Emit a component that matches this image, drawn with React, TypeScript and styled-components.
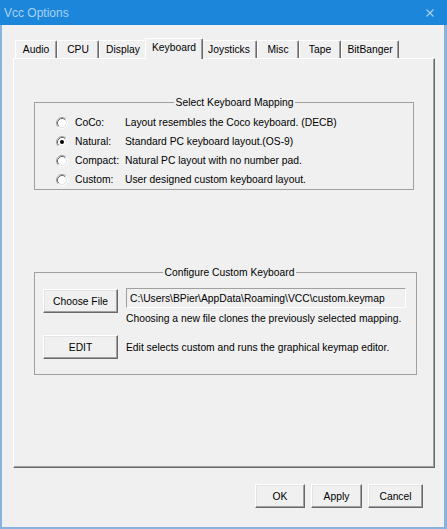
import React from "react";
import styled, { createGlobalStyle } from "styled-components";

const GlobalStyle = createGlobalStyle`
  html, body {
    margin: 0;
    padding: 0;
    background: #f0f0f0;
  }
  body {
    font-family: "Liberation Sans", Arial, sans-serif;
    font-size: 10.3px;
    color: #000;
  }
  * { box-sizing: border-box; }
`;

const Window = styled.div`
  width: 447px;
  height: 529px;
  display: flex;
  flex-direction: column;
  background: #f0f0f0;
  overflow: hidden;
`;

const TitleBar = styled.div`
  height: 25px;
  flex: none;
  display: flex;
  align-items: center;
  justify-content: space-between;
  padding: 0 13px 0 4px;
  background: #1c86da;
  color: #a9d2f5;
  font-family: "Liberation Sans", Arial, sans-serif;
  font-size: 12px;
`;

const Client = styled.div`
  flex: 1;
  display: flex;
  flex-direction: column;
  border-style: solid;
  border-color: #86b4de;
  border-width: 0 3px 2px 2px;
  padding: 13px 9px 0 11px;
`;

const TabStrip = styled.div`
  display: flex;
  align-items: flex-end;
  padding-left: 2px;
  position: relative;
  z-index: 1;
`;

const Tab = styled.div<{ $width: number; $active?: boolean }>`
  flex: none;
  width: ${(p) => (p.$active ? p.$width + 4 : p.$width)}px;
  height: ${(p) => (p.$active ? 21 : 18)}px;
  margin: ${(p) => (p.$active ? "0 -2px -1px -2px" : "0")};
  padding-bottom: ${(p) => (p.$active ? 3 : 1)}px;
  position: ${(p) => (p.$active ? "relative" : "static")};
  z-index: ${(p) => (p.$active ? 2 : "auto")};
  display: flex;
  align-items: center;
  justify-content: center;
  background: #f0f0f0;
  border-top: 1px solid #ffffff;
  border-left: 1px solid #ffffff;
  border-right: 1px solid #696969;
  border-top-right-radius: 2px;
  box-shadow: inset -1px 0 0 #a0a0a0;
  white-space: nowrap;
`;

const Panel = styled.div`
  height: 410px;
  flex: none;
  display: flex;
  flex-direction: column;
  align-items: flex-start;
  border: 1px solid;
  border-color: #ffffff #696969 #696969 #ffffff;
  box-shadow: inset -1px -1px 0 #a0a0a0;
`;

const Group = styled.fieldset<{ $width: number; $top: number }>`
  width: ${(p) => p.$width}px;
  margin: ${(p) => p.$top}px 0 0 20px;
  border: 1px solid #a0a0a0;
  min-width: 0;
`;

const MappingGroup = styled(Group)`
  padding: 4px 0 0 21px;
`;

const CustomGroup = styled(Group)`
  padding: 9px 0 15px 8px;
`;

const Legend = styled.legend`
  margin: 0 auto;
  padding: 0 2px;
  line-height: 13px;
`;

const RadioRow = styled.label`
  height: 19px;
  display: flex;
  align-items: center;
  white-space: nowrap;
`;

const RadioName = styled.span`
  width: 50px;
  flex: none;
  margin-left: 7px;
`;

const RadioBox = styled.svg`
  width: 12px;
  height: 12px;
  flex: none;
  display: block;
`;

const FileRow = styled.div`
  display: flex;
  align-items: flex-start;
  gap: 8px;
`;

const EditRow = styled.div`
  display: flex;
  align-items: center;
  gap: 8px;
  margin-top: 10px;
`;

const FileColumn = styled.div`
  display: flex;
  flex-direction: column;
`;

const PathBox = styled.div`
  width: 280px;
  height: 20px;
  display: flex;
  align-items: center;
  padding-left: 3px;
  border: 1px solid;
  border-color: #a0a0a0 #ffffff #ffffff #a0a0a0;
  background: #f0f0f0;
  white-space: nowrap;
  overflow: hidden;
`;

const Note = styled.div`
  line-height: 13px;
  margin-top: 4px;
  white-space: nowrap;
`;

const PushButton = styled.button<{ $width: number; $offset?: number }>`
  width: ${(p) => p.$width}px;
  height: 24px;
  flex: none;
  margin-top: ${(p) => p.$offset ?? 0}px;
  padding: 0;
  font: inherit;
  color: #000;
  background: #f0f0f0;
  border: 1px solid;
  border-color: #ffffff #696969 #696969 #ffffff;
  box-shadow: inset -1px -1px 0 #a0a0a0, inset 1px 1px 0 #e3e3e3;
  border-radius: 0;
`;

const Footer = styled.div`
  display: flex;
  justify-content: flex-end;
  gap: 6px;
  margin-top: 16px;
  padding-right: 12px;
`;

const Radio = ({ checked }: { checked?: boolean }) => (
  <RadioBox viewBox="0 0 12 12">
    <circle cx="6" cy="6" r="5" fill="#ffffff" />
    <path d="M2.11 9.89 A5.5 5.5 0 0 1 9.89 2.11" fill="none" stroke="#a0a0a0" strokeWidth="1" />
    <path d="M9.89 2.11 A5.5 5.5 0 0 1 2.11 9.89" fill="none" stroke="#ffffff" strokeWidth="1" />
    <path d="M2.82 9.18 A4.5 4.5 0 0 1 9.18 2.82" fill="none" stroke="#696969" strokeWidth="1" />
    <path d="M9.18 2.82 A4.5 4.5 0 0 1 2.82 9.18" fill="none" stroke="#e3e3e3" strokeWidth="1" />
    {checked && <circle cx="6" cy="6" r="2" fill="#000000" />}
  </RadioBox>
);

const tabs: { name: string; width: number }[] = [
  { name: "Audio", width: 42 },
  { name: "CPU", width: 42 },
  { name: "Display", width: 48 },
  { name: "Keyboard", width: 54 },
  { name: "Joysticks", width: 56 },
  { name: "Misc", width: 42 },
  { name: "Tape", width: 42 },
  { name: "BitBanger", width: 58 },
];

const mappings = [
  { name: "CoCo:", desc: "Layout resembles the Coco keyboard. (DECB)" },
  { name: "Natural:", desc: "Standard PC keyboard layout.(OS-9)", checked: true },
  { name: "Compact:", desc: "Natural PC layout with no number pad." },
  { name: "Custom:", desc: "User designed custom keyboard layout." },
];

export default function App() {
  return (
    <>
      <GlobalStyle />
      <Window>
        <TitleBar>
          <span>Vcc Options</span>
          <svg width="8" height="8" viewBox="0 0 8 8">
            <path d="M0.5 0.5 L7.5 7.5 M7.5 0.5 L0.5 7.5" stroke="#a9d2f5" strokeWidth="1.1" />
          </svg>
        </TitleBar>
        <Client>
          <TabStrip>
            {tabs.map((t) => (
              <Tab key={t.name} $width={t.width} $active={t.name === "Keyboard"}>
                {t.name}
              </Tab>
            ))}
          </TabStrip>
          <Panel>
            <MappingGroup $width={380} $top={37}>
              <Legend>Select Keyboard Mapping</Legend>
              {mappings.map((m) => (
                <RadioRow key={m.name}>
                  <Radio checked={m.checked} />
                  <RadioName>{m.name}</RadioName>
                  <span>{m.desc}</span>
                </RadioRow>
              ))}
            </MappingGroup>
            <CustomGroup $width={383} $top={76}>
              <Legend>Configure Custom Keyboard</Legend>
              <FileRow>
                <PushButton $width={75} $offset={1}>Choose File</PushButton>
                <FileColumn>
                  <PathBox>C:\Users\BPier\AppData\Roaming\VCC\custom.keymap</PathBox>
                  <Note>Choosing a new file clones the previously selected mapping.</Note>
                </FileColumn>
              </FileRow>
              <EditRow>
                <PushButton $width={75}>EDIT</PushButton>
                <span>Edit selects custom and runs the graphical keymap editor.</span>
              </EditRow>
            </CustomGroup>
          </Panel>
          <Footer>
            <PushButton $width={50}>OK</PushButton>
            <PushButton $width={51}>Apply</PushButton>
            <PushButton $width={55}>Cancel</PushButton>
          </Footer>
        </Client>
      </Window>
    </>
  );
}
